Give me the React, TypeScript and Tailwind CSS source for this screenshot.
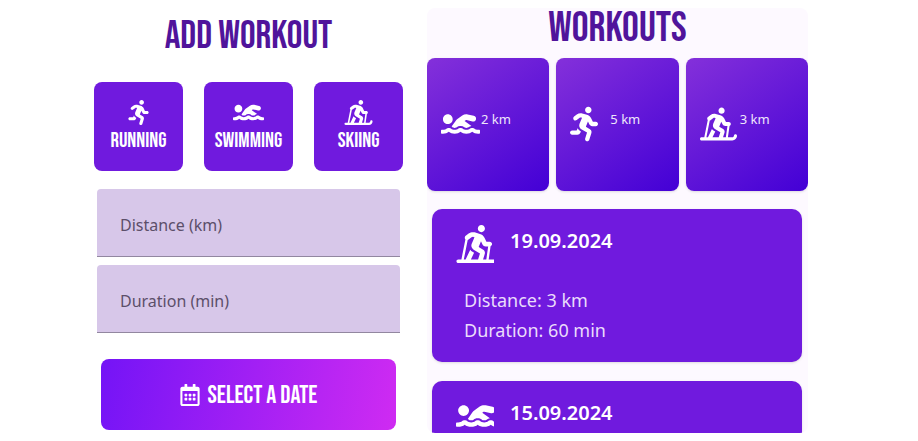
import type { ComponentType } from "react";
import { FaRegCalendarAlt, FaRunning, FaSkiingNordic, FaSwimmer } from "react-icons/fa";

type Icon = ComponentType<{ className?: string; viewBox?: string }>;

const display = "font-['Bebas_Neue','Liberation_Sans_Narrow',sans-serif]";

const sports: { name: string; Icon: Icon }[] = [
  { name: "RUNNING", Icon: FaRunning },
  { name: "SWIMMING", Icon: FaSwimmer },
  { name: "SKIING", Icon: FaSkiingNordic },
];

const totals: { km: number; Icon: Icon; size: string }[] = [
  { km: 2, Icon: FaSwimmer, size: "w-[39px]" },
  { km: 5, Icon: FaRunning, size: "w-[28px]" },
  { km: 3, Icon: FaSkiingNordic, size: "w-[37px]" },
];

const workouts: { date: string; Icon: Icon; box: string; details: string[] }[] = [
  {
    date: "19.09.2024",
    Icon: FaSkiingNordic,
    box: "0 0 500 512",
    details: ["Distance: 3 km", "Duration: 60 min"],
  },
  { date: "15.09.2024", Icon: FaSwimmer, box: "0 0 560 512", details: [] },
];

function Field({ id, label }: { id: string; label: string }) {
  return (
    <div className="flex h-[68px] items-center gap-2 rounded-t-sm border-b border-[#9287a0] bg-[#d7c7e9] px-[23px] pt-1 text-[#5c4f69]">
      <label htmlFor={id}>{label}</label>
      <input id={id} inputMode="numeric" className="w-0 flex-1 bg-transparent outline-none" />
    </div>
  );
}

function AddWorkout() {
  return (
    <section className="flex min-w-0 flex-col pt-2">
      <h1 className={`${display} text-center text-[39px] leading-[42px] text-[#50149b]`}>ADD WORKOUT</h1>
      <div className="mt-6 grid grid-cols-3 gap-[21px]">
        {sports.map(({ name, Icon }) => (
          <button
            key={name}
            type="button"
            className="flex aspect-square flex-col items-center justify-center gap-1 rounded-lg bg-[#701ade] text-white"
          >
            <Icon className="h-[25px] w-[31px]" />
            <span className={`${display} text-[21px] leading-6`}>{name}</span>
          </button>
        ))}
      </div>
      <div className="mt-[18px] flex flex-col gap-2 px-[3px]">
        <Field id="distance" label="Distance (km)" />
        <Field id="duration" label="Duration (min)" />
      </div>
      <button
        type="button"
        className="mx-[7px] mt-[26px] flex h-[71px] items-center justify-center gap-2 rounded-lg bg-linear-[100deg] from-[#7414f6] to-[#cf2bf2] text-white"
      >
        <FaRegCalendarAlt className="h-[22px] w-5" />
        <span className={`${display} pt-0.5 text-[25px] leading-7`}>SELECT A DATE</span>
      </button>
    </section>
  );
}

function Workouts() {
  return (
    <section className="flex min-h-0 min-w-0 flex-col overflow-hidden rounded-lg bg-[#fdf9ff]">
      <h1 className={`${display} text-center text-[42px] leading-[42px] text-[#50149b]`}>WORKOUTS</h1>
      <ul className="mt-2 grid shrink-0 grid-cols-3 gap-[7px] text-white">
        {totals.map(({ km, Icon, size }) => (
          <li
            key={km}
            className="flex h-[133px] rounded-lg bg-linear-[145deg] from-[#8430da] to-[#4300d6] pt-12 pl-[14px] shadow-sm"
          >
            <span className="flex w-[40px] shrink-0">
              <Icon className={`${size} h-9`} />
            </span>
            <span className="pt-[3px] text-[13px] leading-5 text-[#eee6fb]">{km} km</span>
          </li>
        ))}
      </ul>
      <div className="mt-[18px] flex flex-col gap-[19px] pr-[6px] pl-[5px]">
        {workouts.map(({ date, Icon, box, details }) => (
          <article
            key={date}
            className="h-[153px] shrink-0 rounded-[10px] bg-[#701ade] px-6 pt-4 text-white shadow-sm"
          >
            <div className="flex gap-4">
              <Icon className="h-[38px] w-[38px]" viewBox={box} />
              <h2 className="text-xl leading-8 font-semibold">{date}</h2>
            </div>
            <div className="mt-[22px] pl-2 text-lg leading-[30px] text-[#eadcfb]">
              {details.map((line) => (
                <p key={line}>{line}</p>
              ))}
            </div>
          </article>
        ))}
      </div>
    </section>
  );
}

export default function App() {
  return (
    <main className="grid h-screen grid-cols-[minmax(0,309fr)_minmax(0,381fr)] grid-rows-[minmax(0,1fr)] gap-6 overflow-hidden bg-white py-2 pr-[110px] pl-[94px] font-['Noto_Sans',sans-serif]">
      <AddWorkout />
      <Workouts />
    </main>
  );
}
